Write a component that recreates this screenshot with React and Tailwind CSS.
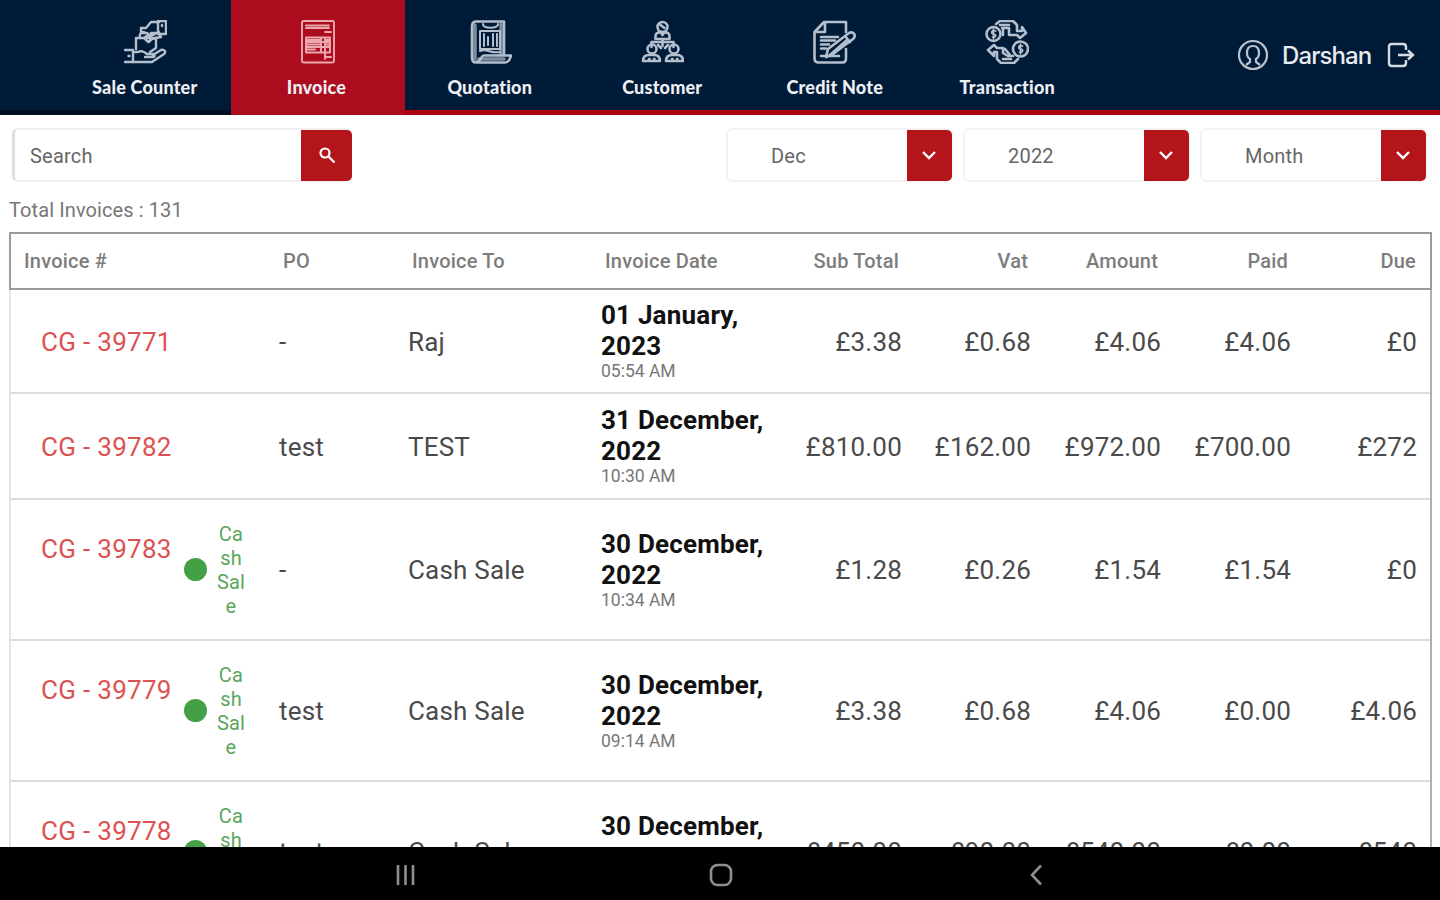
import React from 'react';
import clsx from 'clsx';

const Glyph = ({ children, width = 2.2 }) => (
  <svg
    viewBox="0 0 44 44"
    className="h-11 w-11"
    fill="none"
    stroke="currentColor"
    strokeWidth={width}
    strokeLinecap="round"
    strokeLinejoin="round"
  >
    {children}
  </svg>
);

const SaleCounterIcon = () => (
  <Glyph width={2.4}>
    <g transform="translate(1 0)">
      <path d="M1 30h8v12H1M4.500 36h1" />
      <path d="M9 32h5c4-2 6 0 9 2h6c2 0 2 3 0 3h-8M29 35l8-5c3-1 6 2 3 4l-12 8H9" />
      <path d="M12 18v11M12 18h20v10l-6 4" />
      <path d="M16 18c-1-4 1-6 4-6M17 8h5l5-6h8M17 8v5h6l4 3 8-4M27 13h8" />
      <path d="M34 1h8v13h-8zM38 5v1M22 20l3 2 3-3 4-1" />
      <path d="M20 18l4-3 4 3-4 4zM32 18l5-1-2-3" />
    </g>
  </Glyph>
);

const InvoiceIcon = () => (
  <Glyph width={1.9}>
    <rect x="7" y="1" width="32" height="41.500" rx="1.500" />
    <path d="M11 5.500h24M11 8h24" strokeDasharray="3 1" />
    <path d="M30 12h6M11 17.500h24v15H11zM11 22h24M11 27h24M26 17.500v15M30 17.500v15M30 37h6M30 34v5" />
    <path d="M12 20h13M12 24.500h13M12 29.500h8M30.500 20h4M30.500 24.500h4" />
  </Glyph>
);

const QuotationIcon = () => (
  <Glyph width={2.6}>
    <path d="M8 1.500h28v34M8 1.500c-3 0-4 2-4 5v31c0 3 1 5 4 5h29c3 0 5-3 6-7H16c-3 0-3 6-7 6" />
    <path d="M7 5v34M33 4v31M11 39h25" strokeWidth="3.500" opacity=".7" />
    <path d="M15 4c0 5 15 5 15 0M12 11h20v18H12zM16 14v12M20 17v8M25 14v12M29 14v12M12 31c7-3 11 3 20 1" strokeWidth="2" />
  </Glyph>
);

const CustomerIcon = () => (
  <Glyph width={2.6}>
    <circle cx="22.500" cy="7" r="5" />
    <path d="M15.500 19v-3c0-3 3-4 7-4s7 1 7 4v3h-14M20.500 12l2 3 2-3M20.500 5l4 3" />
    <path d="M22.500 19v7M22.500 22h-11v5M22.500 22h11v5" />
    <circle cx="12" cy="29" r="4.500" />
    <circle cx="34" cy="29" r="4.500" />
    <path d="M9 35c-4 0-6 2-6 6h17c0-4-2-6-6-6zM32 35c-4 0-6 2-6 6h17c0-4-2-6-6-6z" />
    <path d="M9 39h.5M14 39h.5M32 39h.5M37 39h.5M18 25l3 3M28 25l-3 3" />
  </Glyph>
);

const CreditNoteIcon = () => (
  <Glyph width={2.6}>
    <path d="M33 12V2H11L1.500 12v26c0 3 1 4.500 4 4.500h24c2 0 3.500-1.500 3.500-4.500V29M12 3v9H3" />
    <path d="M8 17h17M8 20.500h14M8 24.500h8M8 28.500h5M8 36h18" />
    <path d="M13 37l2-8 21-16c4-2 8 2 4 6L20 34zM32 16l5 6M17 35l17-15" />
  </Glyph>
);

const TransactionIcon = () => (
  <Glyph width={2.6}>
    <circle cx="8.500" cy="14" r="7" />
    <circle cx="35.500" cy="29" r="7.500" />
    <path
      d="M10.500 11c-4-2-5 3-2 3s3 4-1 3M8.500 9v10M37.500 26c-4-2-5 3-2 3s3 4-1 3M35.500 24v10"
      strokeWidth="1.700"
    />
    <path d="M11 4l4-3h13l4 4v6h5v-4l4 6-6 5-3-3h-8V8h-7M15 5h9M18 8v7" />
    <path d="M33 39l-4 4H16l-4-4v-7H9v4l-6-6 6-5 3 3h6v5l5 3h5M18 39h8M20 29l5 6" />
  </Glyph>
);

const tabs = [
  { label: 'Sale Counter', icon: SaleCounterIcon },
  { label: 'Invoice', icon: InvoiceIcon, active: true },
  { label: 'Quotation', icon: QuotationIcon },
  { label: 'Customer', icon: CustomerIcon },
  { label: 'Credit Note', icon: CreditNoteIcon },
  { label: 'Transaction', icon: TransactionIcon },
];

const invoices = [
  { id: 'CG - 39771', po: '-', to: 'Raj', day: '01 January,', year: '2023', time: '05:54 AM', sums: ['£3.38', '£0.68', '£4.06', '£4.06', '£0'], height: 'h-[104px]' },
  { id: 'CG - 39782', po: 'test', to: 'TEST', day: '31 December,', year: '2022', time: '10:30 AM', sums: ['£810.00', '£162.00', '£972.00', '£700.00', '£272'], height: 'h-[106px]' },
  { id: 'CG - 39783', po: '-', to: 'Cash Sale', day: '30 December,', year: '2022', time: '10:34 AM', sums: ['£1.28', '£0.26', '£1.54', '£1.54', '£0'], cash: true, height: 'h-[141px]' },
  { id: 'CG - 39779', po: 'test', to: 'Cash Sale', day: '30 December,', year: '2022', time: '09:14 AM', sums: ['£3.38', '£0.68', '£4.06', '£0.00', '£4.06'], cash: true, height: 'h-[141px]' },
  { id: 'CG - 39778', po: 'test', to: 'Cash Sale', day: '30 December,', year: '2022', time: '09:10 AM', sums: ['£450.00', '£90.00', '£540.00', '£0.00', '£540'], cash: true, height: 'h-[141px]' },
];

const columns = 'grid grid-cols-[269px_129px_193px_172px_128px_129px_130px_130px_126px]';

const NavTab = ({ label, icon: Icon, active }) => (
  <div
    className={clsx(
      'flex flex-col items-center pt-5',
      active ? '-mb-[5px] w-[174px] bg-[#ad0b1e] pr-[3px]' : 'w-[172.5px]',
    )}
  >
    <div className={active ? 'text-[#eba9b0]' : 'text-[#b4bfce]'}>
      <Icon />
    </div>
    <span className="mt-3 whitespace-nowrap text-[18px] font-black leading-[22px] tracking-[0.2px] text-[#eceff3]">
      {label}
    </span>
  </div>
);

const Dropdown = ({ value }) => (
  <div className="flex h-[54px] w-[227px] items-center justify-between rounded-md border-2 border-[#f3f3f3] pl-[43px]">
    <span className="pt-0.5 text-[20px] tracking-[0.2px] text-[#666]">{value}</span>
    <div className="-mr-px flex h-[51px] w-[45px] items-center justify-center rounded-r-[5px] bg-[#b4151a] pr-px">
      <svg viewBox="0 0 16 16" className="h-4 w-4" fill="none" stroke="#fff" strokeWidth="2.400">
        <path d="M2 5l6 6 6-6" />
      </svg>
    </div>
  </div>
);

const InvoiceRow = ({ id, po, to, day, year, time, sums, cash, height }) => (
  <div className={clsx(columns, height, 'shrink-0 items-center border-b-2 border-[#dcdcdc] pt-0.5 text-[26px] tracking-[0.2px] text-[#4a4a4a]')}>
    <div className="flex items-center pl-[30px]">
      <span className={clsx('w-[143px] whitespace-nowrap tracking-[0.3px] text-[#dc5252]', cash && '-mt-[43px]')}>{id}</span>
      {cash && (
        <>
          <span className="-mt-0.5 h-[23px] w-[23px] rounded-full bg-[#43a045]" />
          <span className="-mt-px ml-[9px] w-[30px] break-all text-center text-[20px] leading-6 text-[#5ba65d]">
            Cash Sale
          </span>
        </>
      )}
    </div>
    <span className="-ml-px">{po}</span>
    <span className="-ml-px">{to}</span>
    <div className="-ml-px -mt-0.5 flex flex-col whitespace-nowrap">
      <span className="text-[26px] font-bold leading-[31px] text-[#111]">{day}</span>
      <span className="text-[26px] font-bold leading-[30px] text-[#111]">{year}</span>
      <span className="text-[17.500px] leading-[21px] tracking-normal text-[#777]">{time}</span>
    </div>
    {sums.map((sum, i) => (
      <span key={i} className="text-right tracking-[0.2px]">{sum}</span>
    ))}
  </div>
);

export default function App() {
  return (
    <div className="flex h-[900px] w-[1440px] flex-col overflow-hidden bg-white font-[Roboto,sans-serif]">
      <header className="flex h-[115px] shrink-0 border-b-[5px] border-[#a9040f] bg-[#001b38] font-[Lato,sans-serif]">
        {/* the red underline starts at the active tab */}
        <div className="-mb-[5px] flex border-b-[5px] border-[#000f24] bg-[#001b38] pl-[58.5px]">
          <NavTab {...tabs[0]} />
        </div>
        <NavTab {...tabs[1]} />
        <div className="-ml-[1.500px] flex">
          {tabs.slice(2).map((tab) => (
            <NavTab key={tab.label} {...tab} />
          ))}
        </div>
        <div className="ml-auto flex items-center pr-[25px] text-[#e8ebef]">
          <svg viewBox="0 0 32 32" className="h-8 w-8" fill="none" stroke="#b9c3d0" strokeWidth="2.200">
            <circle cx="16" cy="16" r="14" />
            <path d="M16 7c-4 0-6 3-6 7 0 3 1 5 3 6v3l-4 3M16 7c4 0 6 3 6 7 0 3-1 5-3 6v3l4 3" />
          </svg>
          <span className="ml-[13px] mt-0.5 w-[105px] font-[Inter,sans-serif] text-[24px] font-medium tracking-[-0.9px]">Darshan</span>
          <svg viewBox="0 0 28 28" className="h-7 w-7" fill="none" stroke="#d5dbe3" strokeWidth="2.400">
            <path d="M19 9V6c0-2-1-3-3-3H5C3 3 2 4 2 6v16c0 2 1 3 3 3h11c2 0 3-1 3-3v-3M11 14h15M21 9.500l5 4.500-5 4.500" />
          </svg>
        </div>
      </header>

      <main className="flex h-[732px] shrink-0 flex-col overflow-hidden pl-[9px] pr-2">
        <div className="mt-[13px] flex h-[54px] shrink-0 items-center justify-between">
          <div className="ml-[3px] flex h-[54px] w-[340px] items-center justify-between rounded-md border-2 border-l-[3px] border-[#f0f0f0] border-l-[#dedede] pl-[15px]">
            <span className="pt-0.5 text-[20px] tracking-[0.2px] text-[#666]">Search</span>
            <div className="-mr-0.5 flex h-[51px] w-[51px] items-center justify-center rounded-r-[5px] bg-[#b4151a]">
              <svg viewBox="0 0 18 18" className="h-[18px] w-[18px]" fill="none" stroke="#fff" strokeWidth="2.200">
                <circle cx="7" cy="7" r="4.500" />
                <path d="M10.500 10.500l6 6" />
              </svg>
            </div>
          </div>
          <div className="mr-[5px] flex gap-[10px]">
            <Dropdown value="Dec" />
            <Dropdown value="2022" />
            <Dropdown value="Month" />
          </div>
        </div>

        <p className="mt-4 h-[34px] shrink-0 text-[20px] leading-6 tracking-[0.1px] text-[#777]">Total Invoices : 131</p>

        <div className="flex h-[58px] w-[1423px] shrink-0 items-center border-2 border-[#9b9b9b]">
          <div className={clsx(columns, '-ml-px text-[20px] font-medium tracking-[0.2px] text-[#7d7d7d]')}>
            <span className="pl-[14px]">Invoice #</span>
            <span className="pl-1">PO</span>
            <span className="pl-1">Invoice To</span>
            <span className="pl-1">Invoice Date</span>
            {['Sub Total', 'Vat', 'Amount', 'Paid'].map((name) => (
              <span key={name} className="pr-0.5 text-right">{name}</span>
            ))}
            <span className="text-right">Due</span>
          </div>
        </div>
        <div className="flex w-[1423px] flex-col border-x-2 border-l-[#e4e4e4] border-r-[#b0b0b0]">
          {invoices.map((invoice) => (
            <InvoiceRow key={invoice.id} {...invoice} />
          ))}
        </div>
      </main>

      <footer className="flex h-[53px] shrink-0 items-center bg-black pl-[395px] text-[#8f8f8f]">
        <svg viewBox="0 0 22 22" className="mt-0.5 h-[22px] w-[22px]" fill="none" stroke="currentColor" strokeWidth="2.600">
          <path d="M3 1v20M10.500 1v20M18 1v20" />
        </svg>
        <svg viewBox="0 0 24 24" className="ml-[292px] mt-0.5 h-6 w-6" fill="none" stroke="currentColor" strokeWidth="2.600">
          <rect x="2" y="2" width="20" height="20" rx="6.500" />
        </svg>
        <svg viewBox="0 0 22 22" className="ml-[292px] mt-0.5 h-[22px] w-[22px]" fill="none" stroke="currentColor" strokeWidth="2.600">
          <path d="M16 1.500L7 11l9 9.500" />
        </svg>
      </footer>
    </div>
  );
}
